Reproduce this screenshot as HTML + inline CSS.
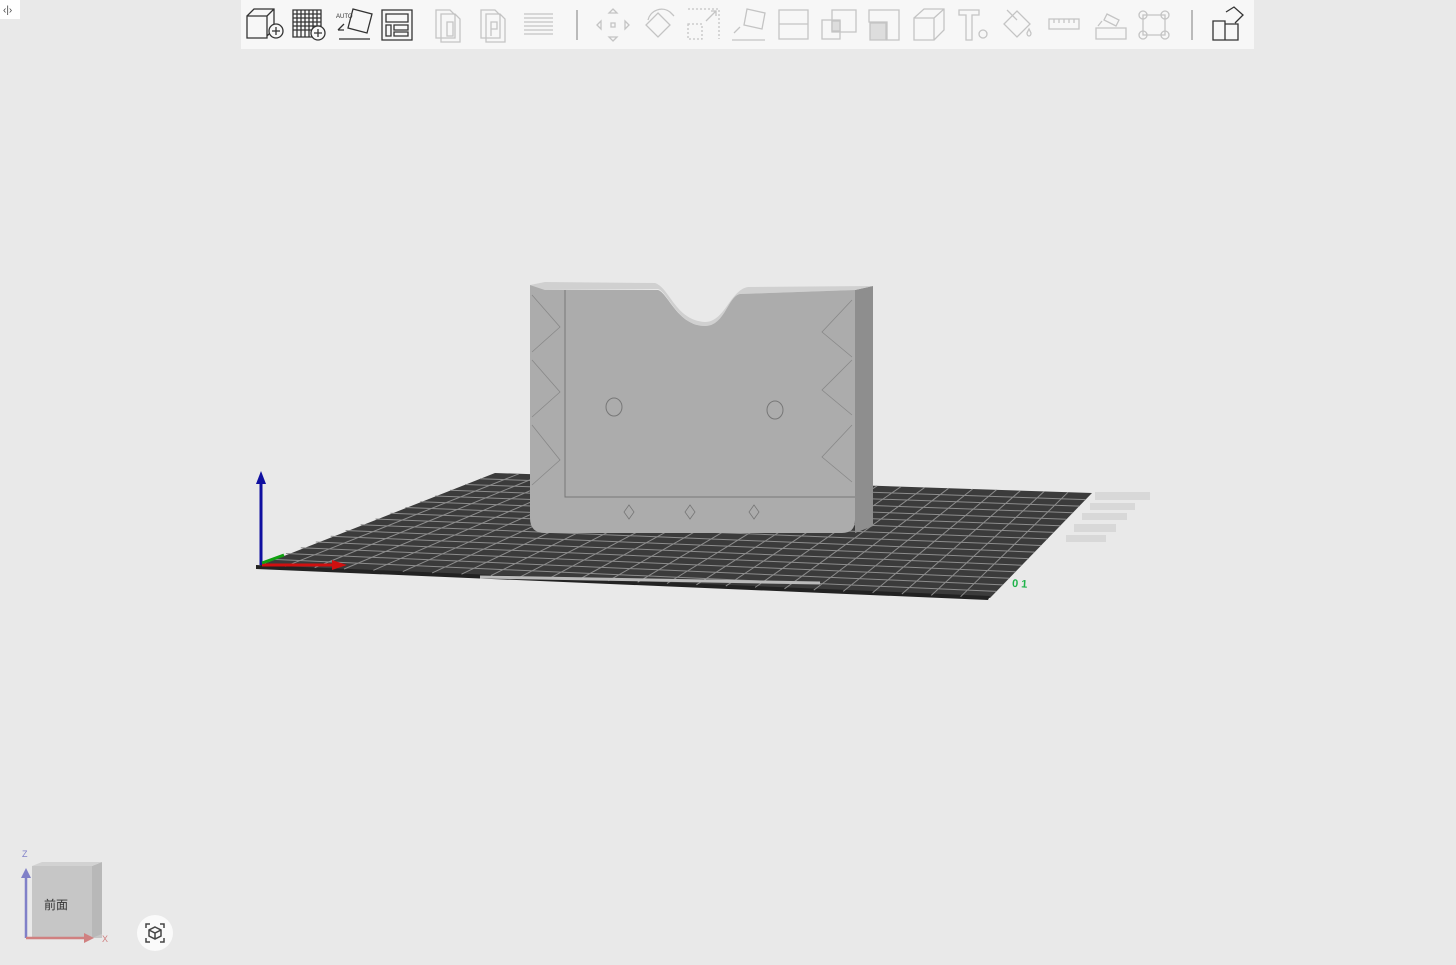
<!DOCTYPE html>
<html><head><meta charset="utf-8"><style>
html,body{margin:0;padding:0;width:1456px;height:965px;overflow:hidden;background:#e9e9e9;font-family:"Liberation Sans","Noto Sans CJK SC",sans-serif}
svg{position:absolute;left:0;top:0}
</style></head><body>
<svg width="1456" height="965" viewBox="0 0 1456 965">
<!-- corner tag -->
<rect x="0" y="0" width="20" height="19" fill="#fff"/>
<text x="3" y="13" font-size="10" fill="#444">‹|›</text>
<!-- toolbar -->
<rect x="241" y="0" width="1013" height="49" fill="#f7f7f7"/>
<g fill="none" stroke="#333" stroke-width="1.3">
 <path d="M247 16h20v22h-20z M247 16l7-7h20v20l-7 7 M267 16l7-7"/>
 <circle cx="276" cy="31" r="7" fill="#f7f7f7"/><path d="M272 31h8M276 27v8"/>
 <path d="M293 10h28v27h-28z M297 10v27M301 10v27M305 10v27M309 10v27M313 10v27M317 10v27M293 14h28M293 18h28M293 22h28M293 26h28M293 30h28"/>
 <circle cx="318" cy="33" r="7" fill="#f7f7f7"/><path d="M314 33h8M318 29v8"/>
 <path d="M353 9l19 5-5 19-19-5z M339 39h31 M338 30l6-6 M338 30h6"/>
 <text x="336" y="18" font-size="6" stroke="none" fill="#333">AUTO</text>
 <path d="M382 10h30v30h-30z M386 14h22v8h-22z M386 25h5v11h-5z M394 25h14v5h-14z M394 32h14v4h-14z"/>
</g>
<g fill="none" stroke="#c4c4c4" stroke-width="1.3">
 <path d="M436 10h14l5 5v23h-19z M441 14h14l5 5v23h-19z M447 22h6v14h-6z"/>
 <path d="M481 10h14l5 5v23h-19z M486 14h14l5 5v23h-19z M491 36v-14h6v7h-6"/>
 <path d="M524 14h29M524 18h29M524 22h29M524 26h29M524 30h29M524 34h29"/>
 <path d="M577 10v30" stroke="#999"/>
 <path d="M613 9l4 4h-8z M613 41l4-4h-8z M597 25l4-4v8z M629 25l-4-4v8z M611 23h4v4h-4z"/>
 <path d="M658 13l12 12-12 12-12-12z M648 20a14 14 0 0 1 22-8 M670 12l4 4"/>
 <path d="M688 24h14v15h-14z M688 9h31v30" stroke-dasharray="2 2"/><path d="M706 21l10-10 M711 11h5v5"/>
 <path d="M747 9l18 4-3 16-18-4z M732 40h33 M734 33l6-6"/>
 <path d="M779 10h29v29h-29z M779 24h29" />
 <path d="M822 20h18v19h-18z M832 10h24v22h-24z"/><path d="M832 21h8v10h-8z" fill="#ddd"/>
 <path d="M869 10h30v30h-12v-18h-18z"/><path d="M870 23h16v17h-16z" fill="#ddd"/>
 <path d="M914 18h20v22h-20z M914 18l10-9h20v21l-10 10 M934 18l10-9"/>
 <path d="M959 10h20v5h-7v25h-6v-25h-7z"/><circle cx="983" cy="34" r="4"/>
 <path d="M1004 24l13-13 13 13-13 13z M1007 10l10 10 M1031 33c0 4-4 4-4 0l2-4z"/>
 <path d="M1049 19h30v10h-30z M1054 19v4M1059 19v4M1064 19v4M1069 19v4M1074 19v4"/>
 <path d="M1096 28h30v11h-30z M1107 14l12 6-3 6-12-6z M1098 26l4-5"/>
 <path d="M1143 15h22v20h-22z"/><circle cx="1143" cy="15" r="4"/><circle cx="1165" cy="15" r="4"/><circle cx="1143" cy="35" r="4"/><circle cx="1165" cy="35" r="4"/>
 <path d="M1192 10v30" stroke="#999"/>
</g>
<g fill="none" stroke="#333" stroke-width="1.3">
 <path d="M1213 21h12v19h-12z M1225 24h13v16h-13z M1226 12l8-5 9 8-8 8"/>
</g>
<!-- plate -->
<polygon points="495,473 1092,493 990,598 256,567" fill="#3b3b3b"/>
<path d="M256 565L990 596 988 600 256 569z" fill="#222"/>
<g stroke="#8d8d8d" stroke-width="1">
<line x1="518.9" y1="473.8" x2="285.4" y2="566.3"/><line x1="542.8" y1="474.6" x2="314.7" y2="567.6"/><line x1="566.6" y1="475.4" x2="344.1" y2="569"/><line x1="590.5" y1="476.2" x2="373.4" y2="570.3"/><line x1="614.4" y1="477" x2="402.8" y2="571.6"/><line x1="638.3" y1="477.8" x2="432.2" y2="572.9"/><line x1="662.2" y1="478.6" x2="461.5" y2="574.2"/><line x1="686" y1="479.4" x2="490.9" y2="575.6"/><line x1="709.9" y1="480.2" x2="520.2" y2="576.9"/><line x1="733.8" y1="481" x2="549.6" y2="578.2"/><line x1="757.7" y1="481.8" x2="579" y2="579.5"/><line x1="781.6" y1="482.6" x2="608.3" y2="580.8"/><line x1="805.4" y1="483.4" x2="637.7" y2="582.2"/><line x1="829.3" y1="484.2" x2="667" y2="583.5"/><line x1="853.2" y1="485" x2="696.4" y2="584.8"/><line x1="877.1" y1="485.8" x2="725.8" y2="586.1"/><line x1="901" y1="486.6" x2="755.1" y2="587.4"/><line x1="924.8" y1="487.4" x2="784.5" y2="588.8"/><line x1="948.7" y1="488.2" x2="813.8" y2="590.1"/><line x1="972.6" y1="489" x2="843.2" y2="591.4"/><line x1="996.5" y1="489.8" x2="872.6" y2="592.7"/><line x1="1020.4" y1="490.6" x2="901.9" y2="594"/><line x1="1044.2" y1="491.4" x2="931.3" y2="595.4"/><line x1="1068.1" y1="492.2" x2="960.6" y2="596.7"/>
<line x1="480.1" y1="478.8" x2="1085.6" y2="499.6"/><line x1="465.1" y1="484.5" x2="1079.3" y2="506.1"/><line x1="450.2" y1="490.3" x2="1072.9" y2="512.7"/><line x1="435.3" y1="496" x2="1066.5" y2="519.3"/><line x1="420.3" y1="501.8" x2="1060.1" y2="525.8"/><line x1="405.4" y1="507.5" x2="1053.8" y2="532.4"/><line x1="390.4" y1="513.3" x2="1047.4" y2="538.9"/><line x1="375.5" y1="519" x2="1041" y2="545.5"/><line x1="360.6" y1="524.8" x2="1034.6" y2="552.1"/><line x1="345.6" y1="530.5" x2="1028.3" y2="558.6"/><line x1="330.7" y1="536.3" x2="1021.9" y2="565.2"/><line x1="315.8" y1="542" x2="1015.5" y2="571.8"/><line x1="300.8" y1="547.8" x2="1009.1" y2="578.3"/><line x1="285.9" y1="553.5" x2="1002.8" y2="584.9"/><line x1="270.9" y1="559.3" x2="996.4" y2="591.4"/>
</g>
<path d="M480 577L820 583" stroke="#bbb" stroke-width="3"/>
<g fill="#d8d8d8"><rect x="1095" y="492" width="55" height="8"/><rect x="1090" y="503" width="45" height="7"/><rect x="1082" y="513" width="45" height="7"/><rect x="1074" y="524" width="42" height="8"/><rect x="1066" y="535" width="40" height="7"/></g>
<text x="1012" y="588" font-size="11" font-weight="bold" fill="#1fb34a" transform="rotate(4 1030 585)">0 1</text>
<!-- model -->
<polygon points="855,290 873,286 873,526 855,533" fill="#8e8e8e"/>
<path d="M530 285L545 282 655 283 C670 288 675 320 705 322 C725 322 730 290 748 287 L873 286 855 290 L740 294 C728 296 725 326 705 326 C678 326 668 292 658 289 L545 290z" fill="#d0d0d0"/>
<path d="M530 285 L545 290 L658 290 C668 293 678 326 705 326 C725 326 728 296 740 294 L855 290 L855 520 Q855 533 842 533 L545 533 Q530 533 530 518 z" fill="#acacac"/>
<path d="M565 290V497H855" fill="none" stroke="#777" stroke-width="1"/>
<path d="M532 295l28 32-28 25M532 360l28 32-28 25M532 425l28 35-28 25M852 300l-30 32 30 25M852 360l-30 30 30 25M852 425l-30 32 30 25" fill="none" stroke="#888" stroke-width="0.8"/>
<path d="M629 505l5 7-5 7-5-7zM690 505l5 7-5 7-5-7zM754 505l5 7-5 7-5-7z" fill="none" stroke="#777" stroke-width="0.8"/>
<ellipse cx="614" cy="407" rx="8" ry="9" fill="none" stroke="#777"/><ellipse cx="775" cy="410" rx="8" ry="9" fill="none" stroke="#777"/>
<!-- axes -->
<line x1="261" y1="565" x2="261" y2="480" stroke="#1010a0" stroke-width="3"/><path d="M256 484l5-13 5 13z" fill="#1010a0"/>
<line x1="262" y1="565" x2="335" y2="565" stroke="#d01010" stroke-width="3"/><path d="M332 560l15 5-15 5z" fill="#d01010"/>
<path d="M262 563l22-8" stroke="#10a010" stroke-width="3"/>
<!-- view cube -->
<path d="M32 866h70v72h-70z" fill="#c6c6c6"/><path d="M92 866l10-4v72l-10 4z" fill="#b8b8b8"/><path d="M32 866l10-4h60l-10 4z" fill="#d2d2d2"/>
<text x="44" y="909" font-size="12" fill="#333">前面</text>
<line x1="26" y1="938" x2="26" y2="873" stroke="#8080c8" stroke-width="2.5"/><path d="M21 878l5-10 5 10z" fill="#8080c8"/>
<line x1="26" y1="938" x2="86" y2="938" stroke="#d08080" stroke-width="2.5"/><path d="M84 933l10 5-10 5z" fill="#d08080"/>
<text x="22" y="857" font-size="9" fill="#8080c8">Z</text><text x="102" y="942" font-size="9" fill="#d08080">X</text>
<circle cx="155" cy="933" r="18" fill="#fafafa"/>
<g fill="none" stroke="#444" stroke-width="1.5"><path d="M146 928v-4h4M160 924h4v4M164 938v4h-4M150 942h-4v-4"/><path d="M155 927l6 3v6l-6 3-6-3v-6zM149 930l6 3 6-3M155 933v6"/></g>
</svg>
</body></html>
